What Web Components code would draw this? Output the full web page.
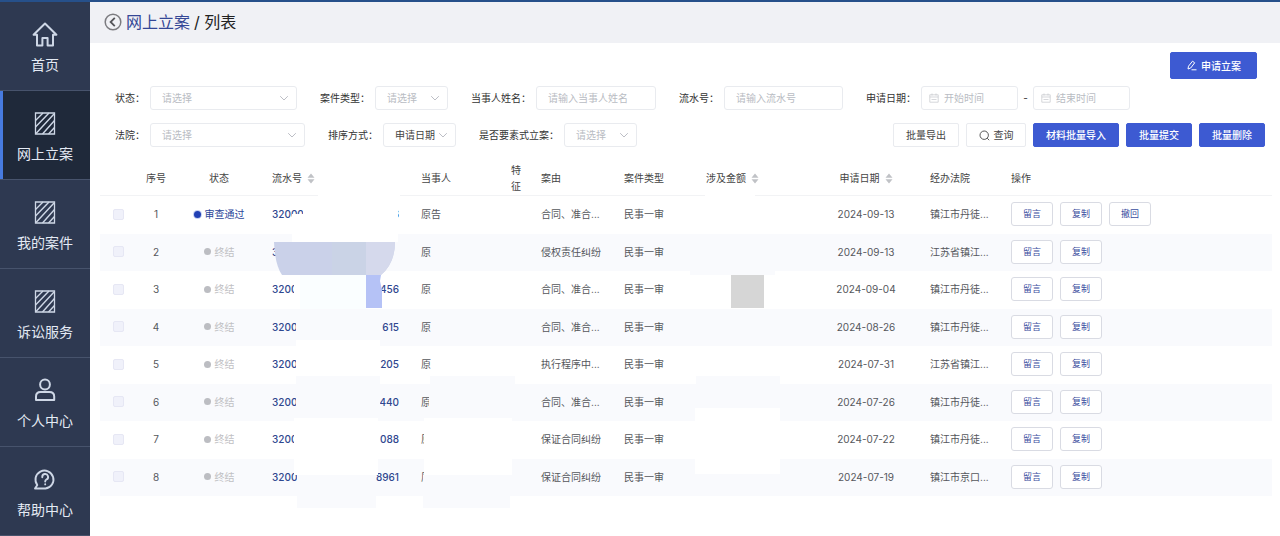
<!DOCTYPE html>
<html lang="zh-CN">
<head>
<meta charset="utf-8">
<title>网上立案</title>
<style>
html,body{margin:0;height:100%}
body{font-family:Inter,"Noto Sans CJK SC",sans-serif;font-size:10px;line-height:16px;color:#333;background:#fff}
</style>
</head>
<body>
<app-shell>
  <side-nav slot="nav">
    <nav-item icon="home">首页</nav-item>
    <nav-item icon="hatch" active>网上立案</nav-item>
    <nav-item icon="hatch">我的案件</nav-item>
    <nav-item icon="hatch">诉讼服务</nav-item>
    <nav-item icon="user">个人中心</nav-item>
    <nav-item icon="help">帮助中心</nav-item>
  </side-nav>
  <page-title slot="head" section="网上立案" page="列表"></page-title>
  <tool-row slot="main" class="top"><ui-button slot="end" kind="primary" size="large" icon="edit">申请立案</ui-button></tool-row>
  <tool-row slot="main">
    <filter-field label="状态：" type="select" value="请选择" style="--w:147px"></filter-field>
    <filter-field label="案件类型：" type="select" value="请选择" style="--w:73px"></filter-field>
    <filter-field label="当事人姓名：" type="text" value="请输入当事人姓名" style="--w:120px"></filter-field>
    <filter-field label="流水号：" type="text" value="请输入流水号" style="--w:119px"></filter-field>
    <filter-field label="申请日期：" type="range" value="开始时间" end="结束时间" style="--w:97px"></filter-field>
  </tool-row>
  <tool-row slot="main">
    <filter-field label="法院：" type="select" value="请选择" style="--w:155px"></filter-field>
    <filter-field label="排序方式：" type="select" value="申请日期" filled style="--w:73px"></filter-field>
    <filter-field label="是否要素式立案：" type="select" value="请选择" style="--w:73px"></filter-field>
    <ui-button slot="end" style="--w:66px">批量导出</ui-button>
    <ui-button slot="end" icon="search" style="--w:60px">查询</ui-button>
    <ui-button slot="end" kind="primary" style="--w:86px">材料批量导入</ui-button>
    <ui-button slot="end" kind="primary" style="--w:66px">批量提交</ui-button>
    <ui-button slot="end" kind="primary" style="--w:66px">批量删除</ui-button>
  </tool-row>
  <case-table slot="main"></case-table>
</app-shell>

<script>
const icons = {
  home:`<svg width="28" height="28" viewBox="0 0 28 28" fill="none" stroke="currentColor" stroke-width="2" stroke-linejoin="round"><path d="M14 3.500 2.600 14.800H6V25.500H11.400V18H16.600V25.500H22V14.800H25.400Z"/></svg>`,
  hatch:`<svg width="28" height="28" viewBox="0 0 28 28" fill="none" stroke="currentColor" stroke-width="1.300"><path d="M4.500 4H23.500V25H4.500Z"/><path d="M4.500 11.500 12 4M4.500 18 18 4M5 24.500 23 5M11.500 25 23.500 11.500M17.500 25 23.500 18.500" stroke-width="1.400"/></svg>`,
  user:`<svg width="28" height="28" viewBox="0 0 28 28" fill="none" stroke="currentColor" stroke-width="2" stroke-linejoin="round"><circle cx="14" cy="8.500" r="4.900"/><path d="M5 24V20.500Q5 16 9.500 16H18.500Q23.200 16 23.200 20.500V24Z"/></svg>`,
  help:`<svg width="28" height="28" viewBox="0 0 28 28" fill="none" stroke="currentColor" stroke-width="1.900" stroke-linecap="round" stroke-linejoin="round"><path d="M4 23.500 6.300 20A9 9 0 1 1 14.500 23.500Z"/><path d="M11.300 12.200A2.900 2.900 0 1 1 15.400 14.500Q14.200 15.200 14.200 16.500M14.200 19.200V19.400"/></svg>`,
  edit:`<svg width="11" height="11" viewBox="0 0 11 11" fill="none" stroke="currentColor" stroke-width="1" stroke-linejoin="round"><path d="M2 9 2.500 6.200 6.500 1.200 8.700 2.800 4.700 8 2 9ZM5.500 9.800H10.500"/></svg>`,
  search:`<svg width="11" height="11" viewBox="0 0 11 11" fill="none" stroke="currentColor" stroke-width="0.900"><circle cx="5.200" cy="5.200" r="4.200"/><path d="M8.200 8.200 10.200 10.200"/></svg>`,
  calendar:`<svg width="10" height="10" viewBox="0 0 10 10" fill="none" stroke="currentColor" stroke-width="0.700"><path d="M.8 1.800H9.200V9.200H.8ZM.8 4H9.200M3 .5V2.500M7 .5V2.500M2.500 6.500H7.500"/></svg>`,
  chevron:`<svg width="10" height="10" viewBox="0 0 10 10" fill="none" stroke="currentColor" stroke-width="0.900"><path d="M1.200 3.200 5 7 8.800 3.200"/></svg>`,
  sort:`<svg width="8" height="11" viewBox="0 0 8 11" fill="#c0c2c6"><path d="M4 .5 7.500 4.700H.5ZM4 10.500 .5 6.300H7.500Z"/></svg>`
};
const define = (name, render) => customElements.define(name, class extends HTMLElement {
  connectedCallback(){
    if (this.shadowRoot) return;
    this.attachShadow({mode:'open'}).innerHTML = render(this);
  }
});

define('app-shell', () => `<style>
:host{display:grid;grid-template:auto 1fr / 90px 1fr;min-height:100%;box-sizing:border-box;border-top:2px solid #26508a}
aside{grid-row:1 / 3;background:#2e3951}
main{display:flex;flex-direction:column;min-width:0;padding:9px 8px 0 10px}
</style><aside><slot name="nav"></slot></aside><header><slot name="head"></slot></header><main><slot name="main"></slot></main>`);

define('side-nav', () => `<style>:host{display:block}nav{display:flex;flex-direction:column}</style><nav><slot></slot></nav>`);

define('nav-item', el => `<style>
:host{display:block;color:#e4eaf4}
a{display:flex;flex-direction:column;align-items:center;gap:7px;box-sizing:border-box;height:89px;padding-top:18px;border-bottom:1px solid #47536c;color:inherit;text-decoration:none;font-size:14px;line-height:20px}
svg{display:block;color:#ced7e6}
:host([active]) a{background:#1f293a;box-shadow:inset 3px 0 #477be0}
</style><a href="#">${icons[el.getAttribute('icon')]}<span><slot></slot></span></a>`);

define('page-title', el => `<style>
:host{display:flex;align-items:center;gap:4px;height:41px;box-sizing:border-box;padding:0 14px 2px;background:#f0f1f5;font-size:16px;line-height:24px;color:#222}
a{display:flex;align-items:center;gap:4px;color:#344796;text-decoration:none}
</style><a href="#"><svg width="18" height="18" viewBox="0 0 18 18" fill="none" stroke="#7c7c80" stroke-width="1.500"><circle cx="9" cy="9" r="7.800"/><path d="M10.800 4.800 6.600 9 10.800 13.200" stroke="#55565a" stroke-width="1.800"/></svg><span>${el.getAttribute('section')}</span></a><span>/ ${el.getAttribute('page')}</span>`);

define('tool-row', () => `<style>
:host{display:flex;justify-content:space-between;align-items:center;padding:0 7px 0 15px;margin-bottom:13px}
:host(.top){padding-right:15px;margin-bottom:7px}
div{display:flex;gap:23px}
.end{gap:7px}
</style><div><slot></slot></div><div class="end"><slot name="end"></slot></div>`);

define('filter-field', el => {
  const type = el.getAttribute('type'), v = el.getAttribute('value'), label = el.getAttribute('label');
  const date = (text, id) => `<span class="box date">${icons.calendar}<input id="${id}" type="text" placeholder="${text}" aria-label="${text}"></span>`;
  const body = type === 'select' ? `<span class="box"><select id="c"><option>${v}</option></select>${icons.chevron}</span>`
    : type === 'text' ? `<span class="box"><input id="c" type="text" placeholder="${v}"></span>`
    : date(v,'c') + '<span class="dash">-</span>' + date(el.getAttribute('end'),'e');
  return `<style>
:host{display:flex;align-items:center;color:#333}
label{margin-right:5px;white-space:nowrap}
.box{position:relative;display:flex;width:var(--w);height:24px}
input,select{appearance:none;width:100%;box-sizing:border-box;margin:0;padding:0 11px;border:1px solid #e9ebef;border-radius:3px;background:#fff;font:inherit;color:#b9bcc3;outline:0}
input::placeholder{color:#b9bcc3;opacity:1}
:host([filled]) select{color:#444}
svg{position:absolute;right:8px;top:7px;color:#b4b7be}
.date svg{left:8px;right:auto;color:#c4c6cc}
.date input{padding:0 0 0 22px}
.dash{width:15px;text-align:center}
</style><label for="c">${label}</label>${body}`;
});

define('ui-button', el => `<style>
:host{display:block}
button{display:flex;align-items:center;justify-content:center;gap:4px;width:var(--w,auto);height:24px;padding:0;border:1px solid #e9ebef;border-radius:2px;background:#fff;color:#444;font:inherit;white-space:nowrap}
:host([kind=primary]) button{background:#3d5ad2;border-color:#3d5ad2;color:#fff;font-weight:500}
:host([size=large]) button{width:87px;height:27px}
:host([kind=row]) button{width:42px;border-color:#d9dbe3;border-radius:3px;color:#3a4da0;font-size:9px}
</style><button type="button">${icons[el.getAttribute('icon')] || ''}<span><slot></slot></span></button>`);

define('status-dot', () => `<style>
:host{display:inline-flex;align-items:center;gap:4px;color:#bfc0c3}
i{width:7px;height:7px;border-radius:50%;background:#bcbdc2}
:host([on]){color:#2b4699}
:host([on]) i{background:#2140b4;box-shadow:0 0 0 1px #c5cff2}
</style><i></i><span><slot></slot></span>`);

const rows = [
  ['审查通过','32000','6','原告','合同、准合...','2024-09-13','镇江市丹徒...'],
  ['终结','3200','','原','侵权责任纠纷','2024-09-13','江苏省镇江...'],
  ['终结','3200','456','原','合同、准合...','2024-09-04','镇江市丹徒...'],
  ['终结','3200','615','原','合同、准合...','2024-08-26','镇江市丹徒...'],
  ['终结','3200','205','原','执行程序中...','2024-07-31','江苏省镇江...'],
  ['终结','3200','440','原','合同、准合...','2024-07-26','镇江市丹徒...'],
  ['终结','3200','088','原','保证合同纠纷','2024-07-22','镇江市丹徒...'],
  ['终结','3200','8961','原','保证合同纠纷','2024-07-19','镇江市京口...']
];
const button = text => `<ui-button kind="row">${text}</ui-button>`;

define('case-table', () => `<style>
:host{display:block;position:relative}
table{width:100%;table-layout:fixed;border-collapse:separate;border-spacing:0;color:#55575c}
th,td{box-sizing:border-box;padding:0 9px;text-align:left;font-weight:400;white-space:nowrap}
th{height:36px;color:#444;border-bottom:1px solid #f2f3f5}
td{height:38px;padding-bottom:2px}
tr:nth-child(even) td{height:37px;background:#f9fafd}
th.c,td.c{text-align:center;padding-left:0;padding-right:0}
.wrap{white-space:normal}
th svg{margin-left:5px;vertical-align:-2px}
input{appearance:none;display:block;width:11px;height:11px;margin:0 auto;border:1px solid #e6e7f4;border-radius:2px;background:#f0f1fa}
a{display:flex;justify-content:space-between;padding-right:4px;color:#2f478f;text-decoration:none;font-weight:500}
.ops{display:flex;gap:7px}
.cover{position:absolute;left:0;top:0;pointer-events:none}
</style>
<table>
<colgroup>${[37,38,88,149,90,30,83,82,114,110,81].map(w => `<col style="width:${w}px">`).join('')}<col></colgroup>
<thead><tr><th class="c"></th><th class="c">序号</th><th class="c">状态</th><th>流水号${icons.sort}</th><th>当事人</th><th class="wrap">特征</th><th>案由</th><th>案件类型</th><th>涉及金额${icons.sort}</th><th class="c">申请日期${icons.sort}</th><th>经办法院</th><th>操作</th></tr></thead>
<tbody>${rows.map((r,i) => `<tr><td class="c"><input type="checkbox" aria-label="选择第${i+1}行"></td><td class="c">${i+1}</td><td class="c"><status-dot${i ? '' : ' on'}>${r[0]}</status-dot></td><td><a href="#"><span>${r[1]}</span><span>${r[2]}</span></a></td><td>${r[3]}</td><td></td><td>${r[4]}</td><td>民事一审</td><td></td><td class="c">${r[5]}</td><td>${r[6]}</td><td><div class="ops">${button('留言')}${button('复制')}${i ? '' : button('撤回')}</div></td></tr>`).join('')}</tbody>
</table>
<svg class="cover" width="700" height="350" viewBox="100 160 700 350" aria-hidden="true">
  <g fill="#fff">
    <path d="M318 180H400V210H398V242H292V214H303V206H318Z"/>
    <path d="M294 275H380V309H294ZM296 340H380V372H296ZM294 418H378V475H294ZM424 418H512V475H424ZM705 187H755V234H705ZM695 408H780V474H695Z"/>
  </g>
  <g fill="#f9fafd">
    <path d="M296 309H381V340H296ZM296 376H380V418H296ZM297 475H376V508H297ZM430 376H515V418H430ZM423 475H510V508H423ZM690 234H775V275H690ZM696 376H780V408H696Z"/>
  </g>
  <path d="M429 390H434V412H429Z" fill="#f9fafd"/>
  <path d="M274 242H395Q395 263 381 275H282Q275 265 274 242Z" fill="#cad1e9"/>
  <path d="M332 242H366V275H332Z" fill="#cad3e6"/>
  <path d="M366 242H395Q395 263 381 275H366Z" fill="#d5d9ec"/>
  <path d="M300 275H366V309H300Z" fill="#fafeff"/>
  <path d="M366 275H381L380 281 382 290V308H366Z" fill="#b5c2f6"/>
  <path d="M731 275H764V308H731Z" fill="#d6d6d6"/>
</svg>`);
</script>
</body>
</html>
